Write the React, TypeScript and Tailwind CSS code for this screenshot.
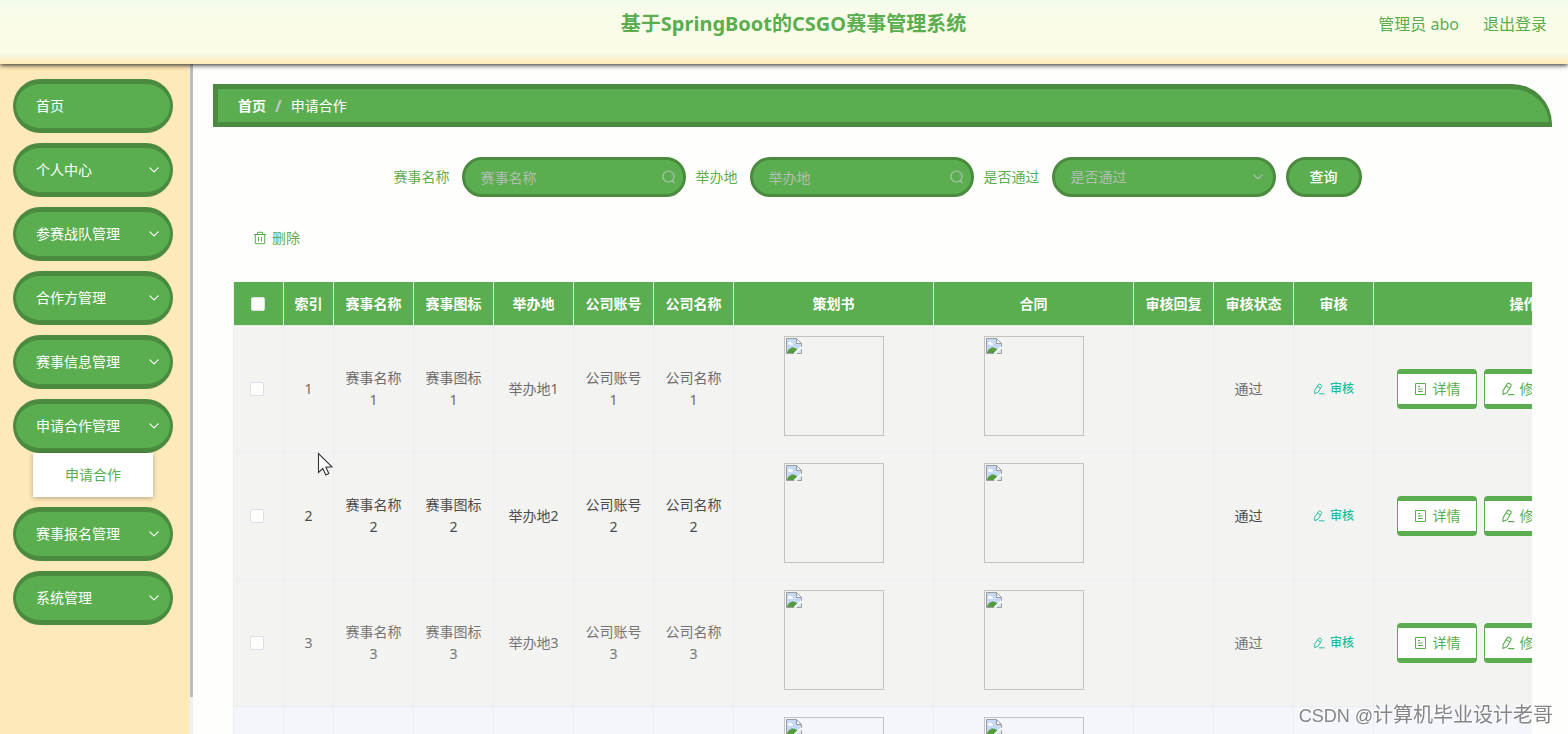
import { Fragment } from "react";

const menu = [
    { label: "首页" },
    { label: "个人中心", arrow: true },
    { label: "参赛战队管理", arrow: true },
    { label: "合作方管理", arrow: true },
    { label: "赛事信息管理", arrow: true },
    { label: "申请合作管理", arrow: true, children: ["申请合作"] },
    { label: "赛事报名管理", arrow: true },
    { label: "系统管理", arrow: true },
];

const columns = [
    { title: "索引", width: "w-[50px]" },
    { title: "赛事名称", width: "w-20" },
    { title: "赛事图标", width: "w-20" },
    { title: "举办地", width: "w-20" },
    { title: "公司账号", width: "w-20" },
    { title: "公司名称", width: "w-20" },
    { title: "策划书", width: "w-[200px]" },
    { title: "合同", width: "w-[200px]" },
    { title: "审核回复", width: "w-20" },
    { title: "审核状态", width: "w-20" },
    { title: "审核", width: "w-20" },
    { title: "操作", width: "w-[300px]" },
];

const rows = [
    { id: 1, tone: "bg-[#f3f3f2] text-[#6c6c6c]" },
    { id: 2, tone: "bg-[#f3f3f2] text-[#4c4c4c]" },
    { id: 3, tone: "bg-[#f3f3f2] text-[#757575]" },
    { id: 4, tone: "bg-[#f4f6fb] text-[#606266]" },
];

function ChevronIcon({ className = "" }: { className?: string }) {
    return (
        <svg className={className} width="12" height="12" viewBox="0 0 12 12" fill="none" stroke="currentColor" strokeWidth="1.1" strokeLinecap="round" strokeLinejoin="round">
            <path d="M1.800 3.800 6 7.800l4.200-4" />
        </svg>
    );
}

function SearchIcon({ className = "" }: { className?: string }) {
    return (
        <svg className={className} width="14" height="14" viewBox="0 0 14 14" fill="none" stroke="currentColor" strokeWidth="1.2" strokeLinecap="round">
            <circle cx="6.500" cy="6.500" r="5.500" />
            <path d="m10 10.600 2.200 2.300" />
        </svg>
    );
}

function TrashIcon() {
    return (
        <svg width="14" height="14" viewBox="0 0 14 14" fill="none" stroke="currentColor" strokeWidth="1">
            <path d="M1 3.500h12M4.500 3.300V1.300h5v2M2.300 3.500v9.200h9.400V3.500M5.500 6v4.300M8.500 6v4.300" />
        </svg>
    );
}

function EditIcon({ size = 14 }: { size?: number }) {
    return (
        <svg width={size} height={size} viewBox="0 0 14 14" fill="none" stroke="currentColor" strokeWidth="1.1" strokeLinejoin="round" strokeLinecap="round">
            <path d="M6.300 1.900Q7 .8 8.100 1.400L9.600 2.300Q10.600 3 10 4L6 10.800 2 12.500 2 8.900ZM5.300 3.900 8.700 5.900M7.500 12.600h5.500" />
        </svg>
    );
}

function DocIcon() {
    return (
        <svg width="14" height="14" viewBox="0 0 14 14" fill="none" stroke="currentColor" strokeWidth="1">
            <path d="M1.500 1.500h10v11h-10ZM4 4.500h2M4 7h4.500M4 9.500h5" />
        </svg>
    );
}

function BrokenImage() {
    return (
        <div role="img" aria-label="图片" className="mx-auto h-[100px] w-[100px] border border-[#c3c3c3] p-px">
            <svg width="16" height="16" viewBox="0 0 16 16">
                <path d="M.5.500h10l5 5v4l-6 6h-9Z" fill="#c6d9f6" />
                <path d="M2 5.500c0-2 3-2.500 3.500-.8 2-.2 2 2 .5 2H3.500C2.500 6.700 2 6.300 2 5.500Z" fill="#fff" />
                <path d="M1 15c1-4 4.500-6.500 8-5l2.500 1.500L8 15Z" fill="#549c3e" />
                <path d="M10 15.500 15.500 10v5.500Z" fill="#d8e5f5" />
                <path d="M8.500 15.500H.5V.5h10l5 5v3.500M11 15.500h4.500V11.500" fill="none" stroke="#9a9c9e" />
                <path d="M10.500.5v5h5Z" fill="#f6f6f6" stroke="#9a9c9e" />
                <path d="m8.500 15.500 7-6.500" stroke="#f8faf7" strokeWidth="1.800" />
            </svg>
        </div>
    );
}

function Header() {
    return (
        <header className="relative z-10 h-16 shrink-0 bg-[linear-gradient(to_bottom,#f1faea_0px,#f9fcea_12px,#fbfce8_40px,#fcfbe5_52px,#f6f6de_56px,#fef1c6_59px,#fdedbc_64px)] shadow-[0_1px_5px_rgba(0,0,0,0.9)]">
            <div className="grid h-12 grid-cols-[1fr_auto_1fr] items-center pl-10 pr-[21px] text-[#5bae50]">
                <h1 className="col-start-2 text-xl font-bold">基于SpringBoot的CSGO赛事管理系统</h1>
                <div className="flex justify-end gap-6 text-base">
                    <span>管理员 abo</span>
                    <a href="#logout">退出登录</a>
                </div>
            </div>
        </header>
    );
}

function Sidebar() {
    return (
        <aside className="flex w-[193px] shrink-0 bg-[#fee9b9]">
            <nav className="flex flex-1 flex-col gap-2.5 pl-[13px] pt-[15px]">
                {menu.map((item) => (
                    <div key={item.label}>
                        <button className="flex h-[54px] w-40 items-center justify-between rounded-full border-x-[3px] border-y-[5px] border-[#4a8b3f] bg-[#5bae50] pl-5 pr-2.5 text-white">
                            {item.label}
                            {item.arrow && <ChevronIcon />}
                        </button>
                        {item.children?.map((child) => (
                            <a
                                key={child}
                                href="#cooperation"
                                className="ml-5 flex h-11 w-[120px] items-center justify-center bg-white text-[#5bae50] shadow-[0_1px_5px_rgba(0,0,0,0.3)]"
                            >
                                {child}
                            </a>
                        ))}
                    </div>
                ))}
            </nav>
            {/* scroll track */}
            <div className="flex w-1 flex-col items-end bg-[#f0f0f0]">
                <div className="h-[94.500%] w-[3px] bg-[#bdbdbd]" />
            </div>
        </aside>
    );
}

function SearchField({ id, label }: { id: string; label: string }) {
    return (
        <div className="flex items-center gap-3">
            <label htmlFor={id} className="text-[#5bae50]">{label}</label>
            <div className="relative">
                <input
                    id={id}
                    placeholder={label}
                    className="block h-10 w-56 rounded-full border-[3px] border-[#4a8b3f] bg-[#5bae50] pl-4 pr-9 text-white placeholder:text-[#b1bfb3]"
                />
                <SearchIcon className="absolute right-2.5 top-[13px] text-[#b1bfb3]" />
            </div>
        </div>
    );
}

function SearchForm() {
    return (
        <form className="mt-[30px] flex items-center justify-center gap-2.5 pr-2.5" onSubmit={(e) => e.preventDefault()}>
            <SearchField id="match-name" label="赛事名称" />
            <SearchField id="place" label="举办地" />
            <div className="flex items-center gap-3">
                <label htmlFor="passed" className="text-[#5bae50]">是否通过</label>
                <div className="relative">
                    <select
                        id="passed"
                        defaultValue=""
                        className="block h-10 w-56 appearance-none rounded-full border-[3px] border-[#4a8b3f] bg-[#5bae50] pl-4 pr-9 text-[#b1bfb3]"
                    >
                        <option value="">是否通过</option>
                        <option value="yes">通过</option>
                        <option value="no">未通过</option>
                    </select>
                    <ChevronIcon className="pointer-events-none absolute right-3 top-[14px] text-[#b1bfb3]" />
                </div>
            </div>
            <button type="submit" className="h-10 w-[76px] rounded-full border-[3px] border-[#4a8b3f] bg-[#5bae50] font-medium text-white">
                查询
            </button>
        </form>
    );
}

function CheckBox({ label }: { label: string }) {
    return (
        <input
            type="checkbox"
            aria-label={label}
            className="block h-3.5 w-3.5 appearance-none rounded-[2px] border border-[#dcdfe6] bg-white checked:bg-[#409eff]"
        />
    );
}

function ActionButton({ icon, text }: { icon: React.ReactNode; text: string }) {
    return (
        <button className="flex h-10 w-20 items-center justify-center gap-[5px] rounded border-x border-y-[5px] border-[#5bae50] bg-white text-[#5bae50]">
            {icon}
            {text}
        </button>
    );
}

function DataTable() {
    const td = "border-b border-r border-[#ebeef5]";

    return (
        <div className="overflow-hidden">
            <table className="w-[1441px] table-fixed border-separate border-spacing-0 border-l border-[#ebeef5] text-center leading-[22px]">
                <thead>
                    <tr className="h-11 bg-[#5bae50] text-white">
                        <th className="w-[50px] border-b border-r border-[#dff0dc] pl-[17px]">
                            <CheckBox label="全选" />
                        </th>
                        {columns.map((col) => (
                            <th key={col.title} className={`${col.width} whitespace-nowrap border-b border-r border-[#dff0dc] px-2 font-bold`}>
                                {col.title}
                            </th>
                        ))}
                    </tr>
                </thead>
                <tbody>
                    {rows.map(({ id, tone }) => (
                        <tr key={id} className={tone}>
                            <td className={`${td} pl-4`}>
                                <CheckBox label={`选择第${id}行`} />
                            </td>
                            <td className={`${td} px-2.5`}>{id}</td>
                            {["赛事名称", "赛事图标", "举办地", "公司账号", "公司名称"].map((name) => (
                                <td key={name} className={`${td} px-2.5`}>{name}{id}</td>
                            ))}
                            <td className={`${td} pb-4 pt-2.5`}><BrokenImage /></td>
                            <td className={`${td} pb-4 pt-2.5`}><BrokenImage /></td>
                            <td className={td}></td>
                            <td className={`${td} pr-2.5`}>通过</td>
                            <td className={td}>
                                <button className="mx-auto flex items-center gap-[5px] text-xs font-medium text-[#1abc9c]">
                                    <EditIcon size={12} />
                                    审核
                                </button>
                            </td>
                            <td className={`${td} pl-[23px]`}>
                                <div className="flex gap-[7px]">
                                    <ActionButton icon={<DocIcon />} text="详情" />
                                    <ActionButton icon={<EditIcon />} text="修改" />
                                </div>
                            </td>
                        </tr>
                    ))}
                </tbody>
            </table>
        </div>
    );
}

export default function App() {
    return (
        <Fragment>
            <div className="flex h-screen flex-col overflow-hidden bg-[#fefefd] font-['Noto_Sans','Noto_Sans_CJK_SC',sans-serif] text-sm">
                <Header />
                <div className="flex min-h-0 flex-1">
                    <Sidebar />
                    <main className="min-w-0 flex-1 overflow-hidden pl-5 pr-4 pt-5">
                        <nav className="flex h-[43px] items-center gap-[9px] rounded-tr-[40px] border-y-[5px] border-l-[5px] border-r-[3px] border-[#4a8b3f] bg-[#5bae50] pl-5 text-white">
                            <a href="#home" className="font-bold">首页</a>
                            <span className="text-base font-bold text-[#c0c4cc]">/</span>
                            <span>申请合作</span>
                        </nav>
                        <div className="px-5">
                            <SearchForm />
                            <button className="ml-5 mt-[30px] flex h-[22px] items-center gap-[5px] text-[#5bae50]">
                                <TrashIcon />
                                删除
                            </button>
                            <div className="mt-[33px]">
                                <DataTable />
                            </div>
                        </div>
                    </main>
                </div>
            </div>

            {/* pointer */}
            <svg className="pointer-events-none fixed left-[317px] top-[452px] z-20" width="17" height="25" viewBox="0 0 17 25">
                <path d="M1.500 1.500v19l4.300-4 3 6.500 3-1.400-2.900-6.300 6-.5Z" fill="#fff" stroke="#333" strokeWidth="1.100" />
            </svg>
            <p className="pointer-events-none fixed bottom-1 right-[15px] z-20 font-['Liberation_Sans','Noto_Sans_CJK_SC',sans-serif] text-xl leading-[30px] text-[#858585] [text-shadow:-1px_-1px_0_#fff]">
                <span className="text-lg">CSDN @</span>计算机毕业设计老哥
            </p>
        </Fragment>
    );
}
